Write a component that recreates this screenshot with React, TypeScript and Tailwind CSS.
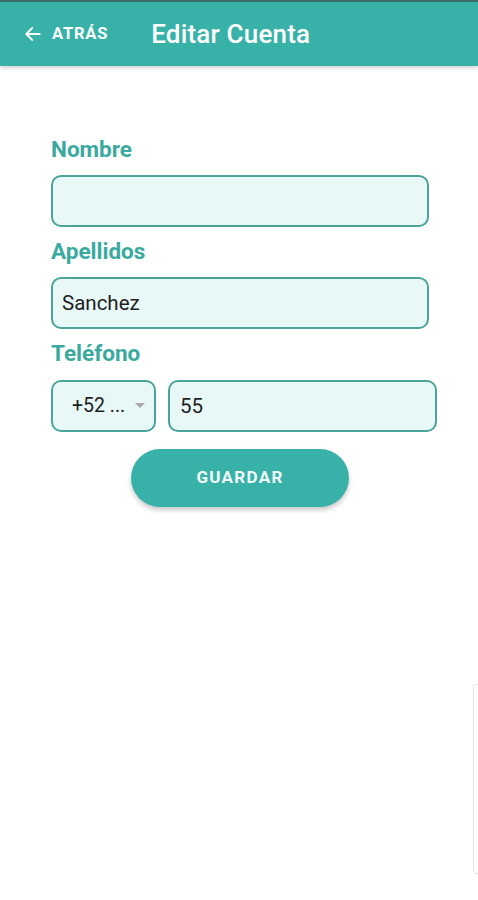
import { useState } from "react";

export default function App() {
  const [nombre, setNombre] = useState("");
  const [apellidos, setApellidos] = useState("Sanchez");
  const [telefono, setTelefono] = useState("55");

  return (
    <div className="min-h-[900px] bg-white relative overflow-hidden font-['Roboto',sans-serif]">
      {/* Header */}
      <header className="h-[66px] bg-[#38b2a8] border-t-2 border-[#3c6e69] shadow-[0_2px_4px_rgba(0,0,0,0.18)] flex items-center">
        <button className="flex items-center pl-[23px] text-white">
          <svg width="20" height="20" viewBox="0 0 24 24" fill="none" stroke="currentColor" strokeWidth={2.4} strokeLinecap="round" strokeLinejoin="round">
            <path d="M20 12H4M11 5l-7 7 7 7" />
          </svg>
          <span className="ml-[9px] text-[16.5px] font-bold tracking-[0.8px]">ATRÁS</span>
        </button>
        <h1 className="ml-[43px] text-white text-[26px] font-medium tracking-[0.2px]">Editar Cuenta</h1>
      </header>

      {/* Form */}
      <main className="pl-[51px] pr-[49px] pt-[71px]">
        <label className="block h-[24px] leading-[24px] text-[22.5px] font-bold text-[#3aaa9f] mb-[14px]">Nombre</label>
        <input
          value={nombre}
          onChange={(e) => setNombre(e.target.value)}
          className="block w-full h-[52px] rounded-[10px] border-2 border-[#4aa49b] bg-[#e8f8f6] px-[9px] text-[20.5px] text-[#1f1f1f] outline-none mb-[12px]"
        />

        <label className="block h-[24px] leading-[24px] text-[22.5px] font-bold text-[#3aaa9f] mb-[14px]">Apellidos</label>
        <input
          value={apellidos}
          onChange={(e) => setApellidos(e.target.value)}
          className="block w-full h-[52px] rounded-[10px] border-2 border-[#4aa49b] bg-[#e8f8f6] px-[9px] text-[20.5px] text-[#1f1f1f] outline-none mb-[12px]"
        />

        <label className="block h-[24px] leading-[24px] text-[22.5px] font-bold text-[#3aaa9f] mb-[15px]">Teléfono</label>
        <div className="flex gap-[12px] mr-[-8px]">
          <div className="w-[105px] h-[52px] shrink-0 rounded-[10px] border-2 border-[#4aa49b] bg-[#e8f8f6] flex items-center pl-[19px] pr-[9px]">
            <span className="text-[19.5px] text-[#1f1f1f]">+52 ...</span>
            <svg className="ml-auto" width="10" height="6" viewBox="0 0 10 6">
              <path d="M0 0h10L5 5z" fill="#a9a9a9" />
            </svg>
          </div>
          <input
            value={telefono}
            onChange={(e) => setTelefono(e.target.value)}
            className="flex-1 min-w-0 h-[52px] rounded-[10px] border-2 border-[#4aa49b] bg-[#e8f8f6] px-[10px] text-[20.5px] text-[#1f1f1f] outline-none"
          />
        </div>

        <div className="flex justify-center mt-[17px]">
          <button className="w-[218px] h-[58px] rounded-full bg-[#38b2a8] text-[#f2fbfa] text-[17px] font-bold tracking-[1.3px] shadow-[0_3px_5px_rgba(0,0,0,0.22)]">
            GUARDAR
          </button>
        </div>
      </main>

      {/* Faint edge of an off-screen panel */}
      <div className="absolute left-[473px] top-[684px] w-[12px] h-[190px] rounded-l-[4px] border border-[#e6e6e6] bg-white" />
    </div>
  );
}
